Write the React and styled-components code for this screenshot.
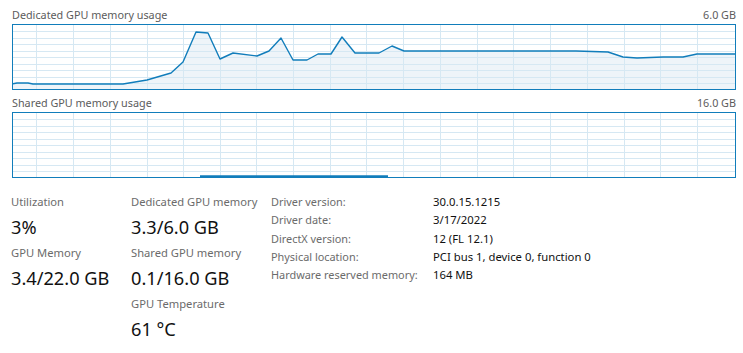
import React from "react";
import styled, { createGlobalStyle } from "styled-components";

const GlobalStyle = createGlobalStyle`
  body {
    margin: 0;
    background: #fff;
    font-family: "Noto Sans", "Open Sans", sans-serif;
  }
`;

// inner chart size (border excluded)
const W = 722;
const H = 64;
const gridX = [36, 73, 110, 147, 183, 220, 256, 293, 330, 366, 403, 440, 477, 513, 550, 587, 624, 660, 697];
const gridY = [31, 38, 44, 51, 57, 64, 70, 77, 83];

// page coordinates read off the screenshot, shifted into the chart
const dedicated = [
  [12, 84], [17, 83], [28, 83], [33, 84], [123, 84], [147, 80], [171, 73], [183, 62],
  [196, 32], [208, 33], [220, 59], [233, 53], [257, 56], [269, 51], [281, 38], [293, 60],
  [307, 60], [318, 54], [331, 54], [342, 37], [355, 53], [379, 53], [392, 46], [404, 51],
  [576, 51], [608, 52], [623, 57], [637, 58], [663, 57], [683, 57], [697, 54], [736, 54],
].map(([x, y]) => [x - 13, y - 25]);

const shared = [[187, 63.5], [375, 63.5]];

function Graph({ points, fill }) {
  const line = points.map((p) => p.join(",")).join(" ");
  const area = `${points[0][0]},${H} ${line} ${points[points.length - 1][0]},${H}`;
  return (
    <svg width="100%" height={H} viewBox={`0 0 ${W} ${H}`} preserveAspectRatio="none">
      {fill && <polygon points={area} fill="#eef4f9" />}
      <g stroke="#d6e8f3" strokeWidth="1" shapeRendering="crispEdges">
        {gridX.map((x) => (
          <line key={"x" + x} x1={x - 13 + 0.5} x2={x - 13 + 0.5} y1={0} y2={H} />
        ))}
        {gridY.map((y) => (
          <line key={"y" + y} x1={0} x2={W} y1={y - 25 + 0.5} y2={y - 25 + 0.5} />
        ))}
      </g>
      <polyline points={line} fill="none" stroke="#117dbb" strokeWidth={fill ? 1.4 : 2.5} strokeLinejoin="round" />
    </svg>
  );
}

function Chart({ title, max, points, fill = true }) {
  return (
    <>
      <ChartHeader>
        <ChartTitle>{title}</ChartTitle>
        <ChartTitle>{max}</ChartTitle>
      </ChartHeader>
      <ChartBox>
        <Graph points={points} fill={fill} />
      </ChartBox>
    </>
  );
}

function Stat({ label, value }) {
  return (
    <StatItem>
      <StatLabel>{label}</StatLabel>
      <StatValue>{value}</StatValue>
    </StatItem>
  );
}

const info = [
  ["Driver version:", "30.0.15.1215"],
  ["Driver date:", "3/17/2022"],
  ["DirectX version:", "12 (FL 12.1)"],
  ["Physical location:", "PCI bus 1, device 0, function 0"],
  ["Hardware reserved memory:", "164 MB"],
];

export default function App() {
  return (
    <Page>
      <GlobalStyle />
      <Chart title="Dedicated GPU memory usage" max="6.0 GB" points={dedicated} />
      <Chart title="Shared GPU memory usage" max="16.0 GB" points={shared} fill={false} />
      <Stats>
        <StatColumn width={120}>
          <Stat label="Utilization" value="3%" />
          <Stat label="GPU Memory" value="3.4/22.0 GB" />
        </StatColumn>
        <StatColumn width={140}>
          <Stat label="Dedicated GPU memory" value="3.3/6.0 GB" />
          <Stat label="Shared GPU memory" value="0.1/16.0 GB" />
          <Stat label="GPU Temperature" value="61 °C" />
        </StatColumn>
        <InfoTable>
          {info.map(([k, v]) => (
            <React.Fragment key={k}>
              <InfoKey>{k}</InfoKey>
              <InfoVal>{v}</InfoVal>
            </React.Fragment>
          ))}
        </InfoTable>
      </Stats>
    </Page>
  );
}

const Page = styled.div`
  width: 743px;
  height: 353px;
  box-sizing: border-box;
  padding: 2px 7px 0 12px;
  overflow: hidden;
`;
const ChartHeader = styled.div`
  display: flex;
  justify-content: space-between;
  align-items: flex-start;
  height: 22px;
  padding-top: 5px;
  box-sizing: border-box;
`;
const ChartTitle = styled.span`
  font-size: 10.8px;
  line-height: 16px;
  color: #5c5c5c;
`;
const ChartBox = styled.div`
  height: 66px;
  box-sizing: border-box;
  border: 1px solid #117dbb;
  background: #fff;
  line-height: 0;
  svg {
    display: block;
  }
`;
const Stats = styled.div`
  display: flex;
  margin: 16px 0 0 -1px;
`;
const StatColumn = styled.div`
  width: ${(p) => p.width}px;
  display: flex;
  flex-direction: column;
`;
const StatItem = styled.div`
  height: 51px;
`;
const StatLabel = styled.div`
  font-size: 11.2px;
  line-height: 16px;
  color: #6b6b6b;
  white-space: nowrap;
`;
const StatValue = styled.div`
  margin-top: 4px;
  font-size: 18.2px;
  line-height: 26px;
  color: #111;
  white-space: nowrap;
`;
const InfoTable = styled.div`
  display: grid;
  grid-template-columns: 162px auto;
  grid-auto-rows: 18.25px;
  align-content: start;
  margin-top: -1px;
  line-height: 18.25px;
`;
const InfoKey = styled.div`
  font-size: 10.9px;
  color: #6b6b6b;
  white-space: nowrap;
`;
const InfoVal = styled.div`
  font-size: 11.3px;
  color: #111;
  white-space: nowrap;
`;
